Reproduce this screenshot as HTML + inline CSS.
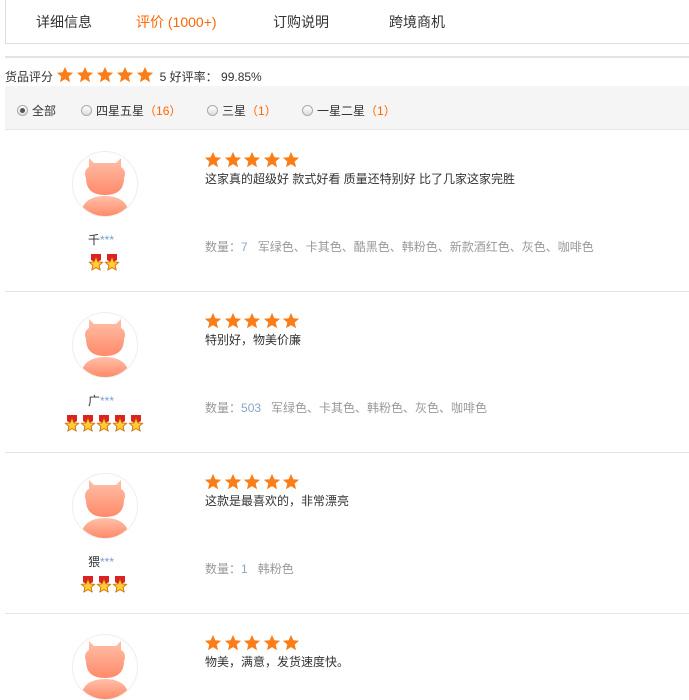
<!DOCTYPE html><html><head><meta charset="utf-8"><style>
body{margin:0;width:689px;height:690px;overflow:hidden;background:#fff;font-family:"Liberation Sans","Noto Sans CJK SC",sans-serif;font-size:12px;color:#333;position:relative}
.a{position:absolute}
.tabs{left:5px;top:-1px;width:684px;height:45px;border:1px solid #ddd;border-right:none;box-sizing:border-box}
.tab{top:12px;font-size:14px;color:#333}
.r{display:inline-block;width:11px;height:11px;border-radius:50%;border:1px solid #aaa;background:linear-gradient(#fff,#ddd);box-sizing:border-box;vertical-align:-1px;margin-right:4px;position:relative}
.o{color:#f60}
.sep{left:5px;width:684px;height:1px;background:#e5e5e5}
.av{width:64px;height:64px;border-radius:50%;border:1px solid #eee;left:72px;overflow:hidden;background:#fff}
.gray{color:#999}
</style></head><body>
<div class="a tabs"></div>
<div class="a tab" style="left:36px">详细信息</div>
<div class="a tab" style="left:136px;color:#f60">评价 (1000+)</div>
<div class="a tab" style="left:273px">订购说明</div>
<div class="a tab" style="left:389px">跨境商机</div>
<div class="a" style="left:5px;top:56px;width:684px;height:2px;background:#e3e3e3"></div>
<div class="a" style="left:5px;top:66px;line-height:16px">货品评分 <span id="s0"></span> 5 好评率：&nbsp;99.85%</div>
<div class="a" style="left:5px;top:86px;width:684px;height:43px;background:#f5f5f5;border-bottom:1px solid #e5e5e5"></div>
<div class="a" style="left:17px;top:102px"><span class="r"><span style="position:absolute;left:2px;top:2px;width:5px;height:5px;border-radius:50%;background:#555"></span></span>全部</div>
<div class="a" style="left:81px;top:102px"><span class="r"></span>四星五星<span class="o">（16）</span></div>
<div class="a" style="left:207px;top:102px"><span class="r"></span>三星<span class="o">（1）</span></div>
<div class="a" style="left:302px;top:102px"><span class="r"></span>一星二星<span class="o">（1）</span></div>
<div id="rows"></div>
<script>
function star(s,x){return '<svg width="'+s+'" height="'+s+'" viewBox="0 0 20 20" style="vertical-align:-3px;margin-right:'+x+'px"><path d="M10 1l2.6 6 6.4.5-4.9 4.2 1.5 6.3L10 14.6 4.4 18l1.5-6.3L1 7.5l6.4-.5z" fill="#fb7d17"/></svg>';}
function stars(s,x){let h='';for(let i=0;i<5;i++)h+=star(s,x);return h;}
document.getElementById('s0').innerHTML=stars(18,2);
function medal(n){let h='';for(let i=0;i<n;i++)h+='<svg width="16" height="18" viewBox="0 0 16 18"><path d="M3 0h10v6l-5 3-5-3z" fill="#d22"/><path d="M8 3.5l2 4.4 4.6.4-3.5 3.1 1.1 4.6L8 13.6 3.8 16l1.1-4.6-3.5-3.1 4.6-.4z" fill="#fc3" stroke="#c60" stroke-width=".8"/></svg>';return h;}
const d=[["千",2,"这家真的超级好 款式好看 质量还特别好 比了几家这家完胜","7","军绿色、卡其色、酷黑色、韩粉色、新款酒红色、灰色、咖啡色"],
["广",5,"特别好，物美价廉","503","军绿色、卡其色、韩粉色、灰色、咖啡色"],
["猥",3,"这款是最喜欢的，非常漂亮","1","韩粉色"],
["",0,"物美，满意，发货速度快。","",""]];
let h='';
d.forEach((r,i)=>{const t=130+i*161;
h+='<div class="a av" style="top:'+(t+21)+'px"><svg width="64" height="64" viewBox="0 0 64 64"><defs><linearGradient id="g'+i+'" x1="0" y1="0" x2="0" y2="1"><stop offset="0" stop-color="#ffc0a8"/><stop offset="1" stop-color="#ff8a6a"/></linearGradient></defs><path d="M16 6l5 5h22l5-5 0 9c4 2 5 7 3 11 0 11-6 17-19 17S13 37 13 26c-2-4-1-9 3-11z" fill="url(#g'+i+')"/><path d="M8 64c0-14 10-20 24-20s24 6 24 20z" fill="url(#g'+i+')"/></svg></div>';
if(r[0]){h+='<div class="a" style="left:88px;top:'+(t+101)+'px">'+r[0]+'<span style="color:#7a9fd0">***</span></div>';
h+='<div class="a" style="left:'+(104-r[1]*8)+'px;top:'+(t+124)+'px;line-height:0">'+medal(r[1])+'</div>';}
h+='<div class="a" style="left:204px;top:'+(t+21)+'px;line-height:0">'+stars(18,1.5)+'</div>';
h+='<div class="a" style="left:205px;top:'+(t+40)+'px">'+r[2]+'</div>';
if(r[3])h+='<div class="a gray" style="left:205px;top:'+(t+108)+'px">数量：<span style="color:#8aa6c8">'+r[3]+'</span>&nbsp;&nbsp;&nbsp;'+r[4]+'</div>';
if(i<3)h+='<div class="a sep" style="top:'+(t+161)+'px"></div>';});
document.getElementById('rows').innerHTML=h;
</script></body></html>
